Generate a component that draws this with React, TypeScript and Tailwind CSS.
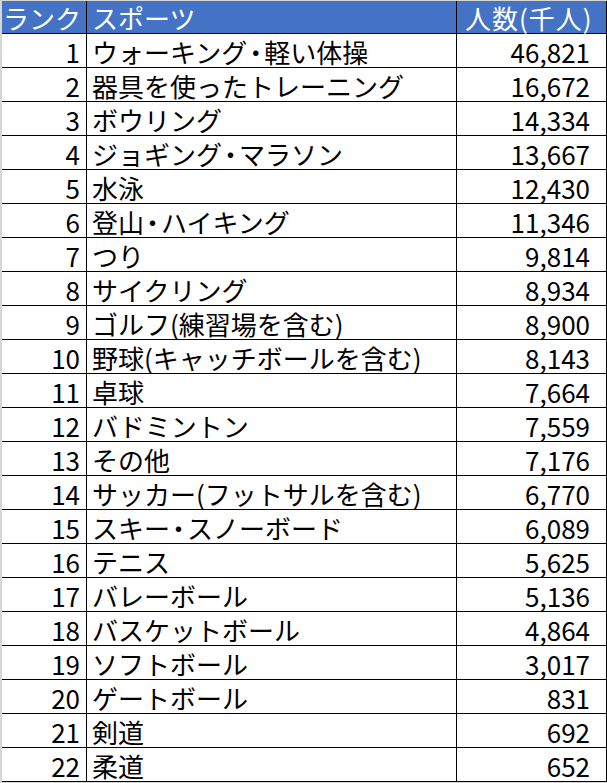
import React from "react";

const rows: [number, string, string][] = [
  [1, "ウォーキング・軽い体操", "46,821"],
  [2, "器具を使ったトレーニング", "16,672"],
  [3, "ボウリング", "14,334"],
  [4, "ジョギング・マラソン", "13,667"],
  [5, "水泳", "12,430"],
  [6, "登山・ハイキング", "11,346"],
  [7, "つり", "9,814"],
  [8, "サイクリング", "8,934"],
  [9, "ゴルフ(練習場を含む)", "8,900"],
  [10, "野球(キャッチボールを含む)", "8,143"],
  [11, "卓球", "7,664"],
  [12, "バドミントン", "7,559"],
  [13, "その他", "7,176"],
  [14, "サッカー(フットサルを含む)", "6,770"],
  [15, "スキー・スノーボード", "6,089"],
  [16, "テニス", "5,625"],
  [17, "バレーボール", "5,136"],
  [18, "バスケットボール", "4,864"],
  [19, "ソフトボール", "3,017"],
  [20, "ゲートボール", "831"],
  [21, "剣道", "692"],
  [22, "柔道", "652"],
];

function Name({ text }: { text: string }) {
  const parts = text.split("・");
  return (
    <>
      {parts.map((p, i) => (
        <React.Fragment key={i}>
          {i > 0 && <span className="[font-feature-settings:'palt'] px-[2px]">・</span>}
          {p}
        </React.Fragment>
      ))}
    </>
  );
}

export default function App() {
  return (
    <div className="w-[607px] h-[783px] bg-[#d6d6d6] pt-[1px] pl-[2px] overflow-hidden font-['Noto_Sans_CJK_JP',sans-serif] text-[26px] leading-none text-black">
      <div className="w-[605px] bg-white">
        <div className="flex h-[33px] bg-[#4472c4] text-white border-b border-black box-border">
          <div className="w-[85px] border-r border-black flex items-center pl-[1px] pt-[1px]">ランク</div>
          <div className="w-[370px] border-r border-black flex items-center pl-[5px] pt-[1px]">スポーツ</div>
          <div className="flex-1 border-r border-black flex items-center pl-[8px] pt-[1px] tracking-[1px]">人数(千人)</div>
        </div>
        {rows.map(([r, name, n]) => (
          <div key={r} className="flex h-[34px] border-b border-black box-border">
            <div className="w-[85px] border-r border-black flex items-center justify-end pr-[6px] pt-[2px]">{r}</div>
            <div className="w-[370px] border-r border-black flex items-center pl-[5px] pt-[2px] whitespace-nowrap">
              <Name text={name} />
            </div>
            <div className="flex-1 border-r border-black flex items-center justify-end pr-[16px] pt-[2px]">{n}</div>
          </div>
        ))}
      </div>
    </div>
  );
}
